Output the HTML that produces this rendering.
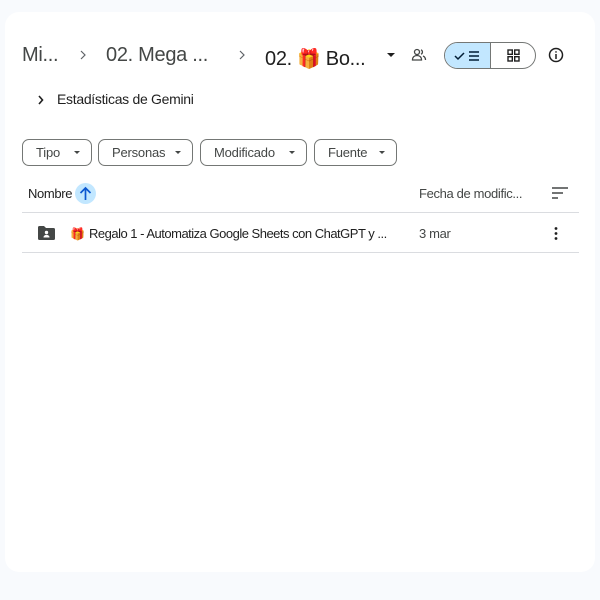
<!DOCTYPE html>
<html><head><meta charset="utf-8"><style>
*{box-sizing:border-box;margin:0;padding:0}
body{width:600px;height:600px;background:#f8fafd;font-family:"Liberation Sans","Noto Sans CJK SC",sans-serif;color:#1f1f1f;position:relative;overflow:hidden}
.card{position:absolute;left:5px;top:12px;width:590px;height:560px;background:#fff;border-radius:14px}
.abs{position:absolute;white-space:nowrap}
.bc{font-size:20px;color:#444746;top:44px;letter-spacing:-0.3px}
.chip{position:absolute;top:139px;height:27px;border:1px solid #747775;border-radius:7px;font-size:13px;color:#444746;padding-left:13px;line-height:25px;letter-spacing:-0.2px}
.chip:after{content:"";position:absolute;right:11px;top:11px;border-left:3.5px solid transparent;border-right:3.5px solid transparent;border-top:3.5px solid #444746}
.hr{position:absolute;left:22px;width:557px;height:1px;background:#dadce0}
.t13{font-size:13px;letter-spacing:-0.35px}
</style></head><body>
<div class="card"></div>
<div class="abs bc" style="left:22px">Mi...</div>
<svg class="abs" style="left:78px;top:49px" width="10" height="12"><path d="M3 2l4 4-4 4" fill="none" stroke="#5f6368" stroke-width="1.2"/></svg>
<div class="abs bc" style="left:106px">02. Mega ...</div>
<svg class="abs" style="left:237px;top:49px" width="10" height="12"><path d="M3 2l4 4-4 4" fill="none" stroke="#5f6368" stroke-width="1.2"/></svg>
<div class="abs bc" style="left:265px;color:#1f1f1f">02. <span style="font-family:'Noto Sans CJK SC';font-size:19px">🎁</span> Bo...</div>
<svg class="abs" style="left:386px;top:52px" width="10" height="6"><path d="M1 1h8L5 5z" fill="#1f1f1f"/></svg>
<svg class="abs" style="left:411px;top:47px" width="16" height="16" fill="none" stroke="#444746" stroke-width="1.3"><circle cx="6" cy="5" r="2.5"/><path d="M1.5 13c0-3 2-4.5 4.5-4.5S10.5 10 10.5 13z"/><path d="M10 2.8a2.4 2.4 0 010 4.4M12 9c1.5.6 2.5 2 2.5 4"/></svg>
<div class="abs" style="left:444px;top:42px;width:92px;height:27px;border:1px solid #747775;border-radius:14px;overflow:hidden">
<div style="position:absolute;left:0;top:0;width:46px;height:25px;background:#c2e7ff;border-right:1px solid #747775"></div>
<svg style="position:absolute;left:9px;top:6px" width="30" height="14" fill="none" stroke="#001d35" stroke-width="1.5"><path d="M1 7l3 3 6-6"/><path d="M15 3h10M15 7h10M15 11h10"/></svg>
<svg style="position:absolute;left:62px;top:6px" width="13" height="13" fill="none" stroke="#1f1f1f" stroke-width="1.4"><rect x="1" y="1" width="4.3" height="4.3"/><rect x="7.7" y="1" width="4.3" height="4.3"/><rect x="1" y="7.7" width="4.3" height="4.3"/><rect x="7.7" y="7.7" width="4.3" height="4.3"/></svg>
</div>
<svg class="abs" style="left:548px;top:47px" width="16" height="16" fill="none" stroke="#1f1f1f" stroke-width="1.5"><circle cx="8" cy="8" r="6.5"/><path d="M8 7v5M8 4.2v1.4"/></svg>
<svg class="abs" style="left:36px;top:94px" width="10" height="12"><path d="M3 2l3.5 4L3 10" fill="none" stroke="#1f1f1f" stroke-width="1.6"/></svg>
<div class="abs" style="left:57px;top:91px;font-size:14px;color:#1f1f1f;letter-spacing:-0.3px">Estadísticas de Gemini</div>
<div class="chip" style="left:22px;width:70px">Tipo</div>
<div class="chip" style="left:98px;width:95px">Personas</div>
<div class="chip" style="left:200px;width:107px">Modificado</div>
<div class="chip" style="left:314px;width:83px">Fuente</div>
<div class="abs t13" style="left:28px;top:186px;color:#1f1f1f">Nombre</div>
<div class="abs" style="left:75px;top:183px;width:21px;height:21px;border-radius:50%;background:#c2e7ff"></div>
<svg class="abs" style="left:79px;top:186px" width="13" height="15" fill="none" stroke="#0b57d0" stroke-width="1.7"><path d="M6.5 14V2M1.5 7l5-5 5 5"/></svg>
<div class="abs t13" style="left:419px;top:186px;color:#444746">Fecha de modific...</div>
<svg class="abs" style="left:551px;top:186px" width="18" height="14" fill="none" stroke="#444746" stroke-width="1.6"><path d="M1 2h16M1 7h11M1 12h6"/></svg>
<div class="hr" style="top:212px"></div>
<svg class="abs" style="left:37px;top:225px" width="19" height="16"><path d="M1 2.5A1.5 1.5 0 012.5 1H7l2 2h7.5A1.5 1.5 0 0118 4.5v9a1.5 1.5 0 01-1.5 1.5h-14A1.5 1.5 0 011 13.5z" fill="#444746"/><circle cx="9.5" cy="7.5" r="1.7" fill="#fff"/><path d="M6.5 12.5c0-1.8 1.5-2.6 3-2.6s3 .8 3 2.6z" fill="#fff"/></svg>
<div class="abs" style="left:70px;top:225px;font-size:12px;font-family:'Noto Sans CJK SC'">🎁</div>
<div class="abs t13" style="left:89px;top:226px;color:#1f1f1f;letter-spacing:-0.5px">Regalo 1 - Automatiza Google Sheets con ChatGPT y ...</div>
<div class="abs t13" style="left:419px;top:226px;color:#444746">3 mar</div>
<svg class="abs" style="left:553px;top:226px" width="6" height="15" fill="#1f1f1f"><circle cx="3" cy="2.5" r="1.4"/><circle cx="3" cy="7.5" r="1.4"/><circle cx="3" cy="12.5" r="1.4"/></svg>
<div class="hr" style="top:252px"></div>
</body></html>
